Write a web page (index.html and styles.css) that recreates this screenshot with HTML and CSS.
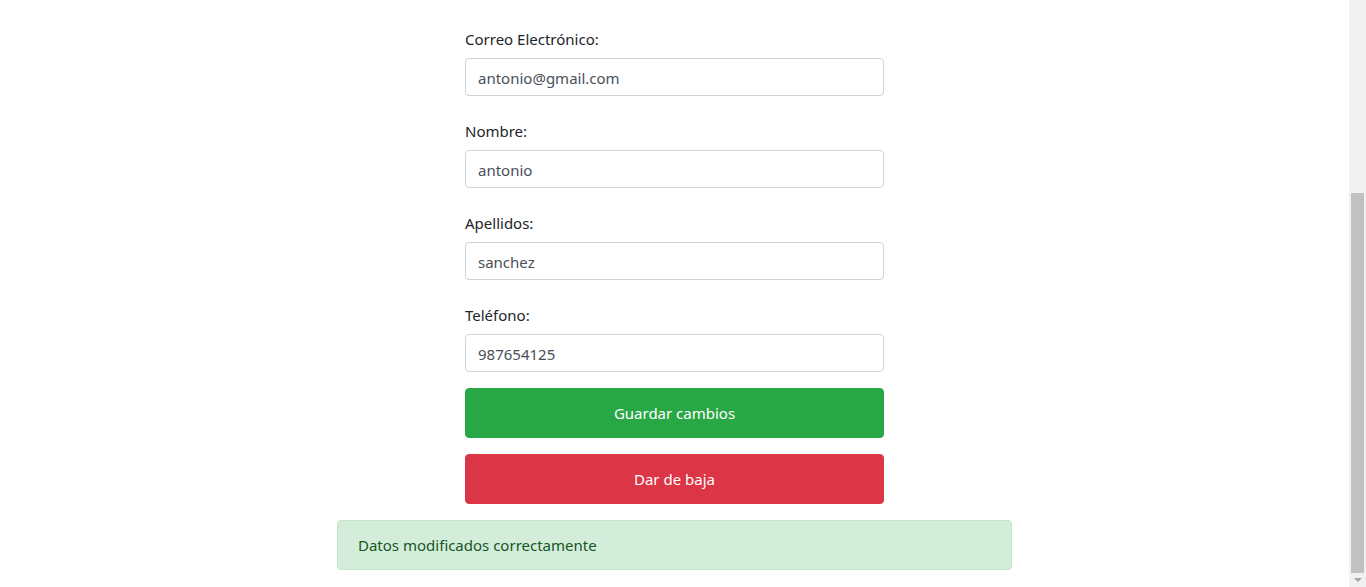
FILE: index.html
```html
<!DOCTYPE html>
<html lang="es">
<head>
<meta charset="utf-8">
<title>Perfil</title>
<link rel="stylesheet" href="styles.css">
</head>
<body>
<div class="page">
  <main class="content">
    <form class="form">
      <div class="group">
        <label class="label">Correo Electrónico:</label>
        <input class="input" type="text" value="antonio@gmail.com">
      </div>
      <div class="group">
        <label class="label">Nombre:</label>
        <input class="input" type="text" value="antonio">
      </div>
      <div class="group">
        <label class="label">Apellidos:</label>
        <input class="input" type="text" value="sanchez">
      </div>
      <div class="group last">
        <label class="label">Teléfono:</label>
        <input class="input" type="text" value="987654125">
      </div>
      <button type="button" class="btn btn-success">Guardar cambios</button>
      <button type="button" class="btn btn-danger">Dar de baja</button>
    </form>
    <div class="alert">Datos modificados correctamente</div>
  </main>
  <div class="scrollbar">
    <div class="track"><div class="thumb"></div></div>
    <div class="arrow"></div>
  </div>
</div>
</body>
</html>
```
FILE: styles.css
```css
* { box-sizing: border-box; }
html, body { margin: 0; padding: 0; height: 100%; overflow: hidden; }
body {
  font-family: "Segoe UI", "Noto Sans", "Open Sans", sans-serif;
  font-size: 15px;
  line-height: 24px;
  color: #212529;
  background: #fff;
}
.page { display: flex; height: 587px; }
.content {
  flex: 1;
  display: flex;
  flex-direction: column;
  align-items: center;
  padding-top: 26px;
}
.form { width: 419px; display: flex; flex-direction: column; }
.group { display: flex; flex-direction: column; margin-bottom: 22px; }
.group.last { margin-bottom: 16px; }
.label { padding-top: 1px; margin-bottom: 7px; color: #212529; }
.input {
  height: 38px;
  padding: 7px 12px 5px;
  border: 1px solid #ced4da;
  border-radius: 4px;
  font: inherit;
  color: #495057;
  background: #fff;
}
.btn {
  height: 50px;
  padding: 12px;
  border: 1px solid transparent;
  border-radius: 4px;
  font: inherit;
  color: #fff;
  margin-bottom: 16px;
  text-align: center;
}
.btn-success { background: #28a745; border-color: #28a745; }
.btn-danger { background: #dc3545; border-color: #dc3545; }
.alert {
  width: 675px;
  height: 50px;
  padding: 12px 20px;
  background: #d4edda;
  border: 1px solid #c3e6cb;
  border-radius: 4px;
  color: #155724;
}
.scrollbar {
  width: 17px;
  background: #f1f1f1;
  display: flex;
  flex-direction: column;
}
.track { flex: 1; display: flex; flex-direction: column; padding: 193px 2px 0 2px; }
.thumb { height: 380px; background: #c1c1c1; }
.arrow {
  height: 14px;
  display: flex;
  justify-content: center;
  align-items: center;
}
.arrow::before {
  content: "";
  border-left: 4px solid transparent;
  border-right: 4px solid transparent;
  border-top: 4px solid #a3a3a3;
}
```
